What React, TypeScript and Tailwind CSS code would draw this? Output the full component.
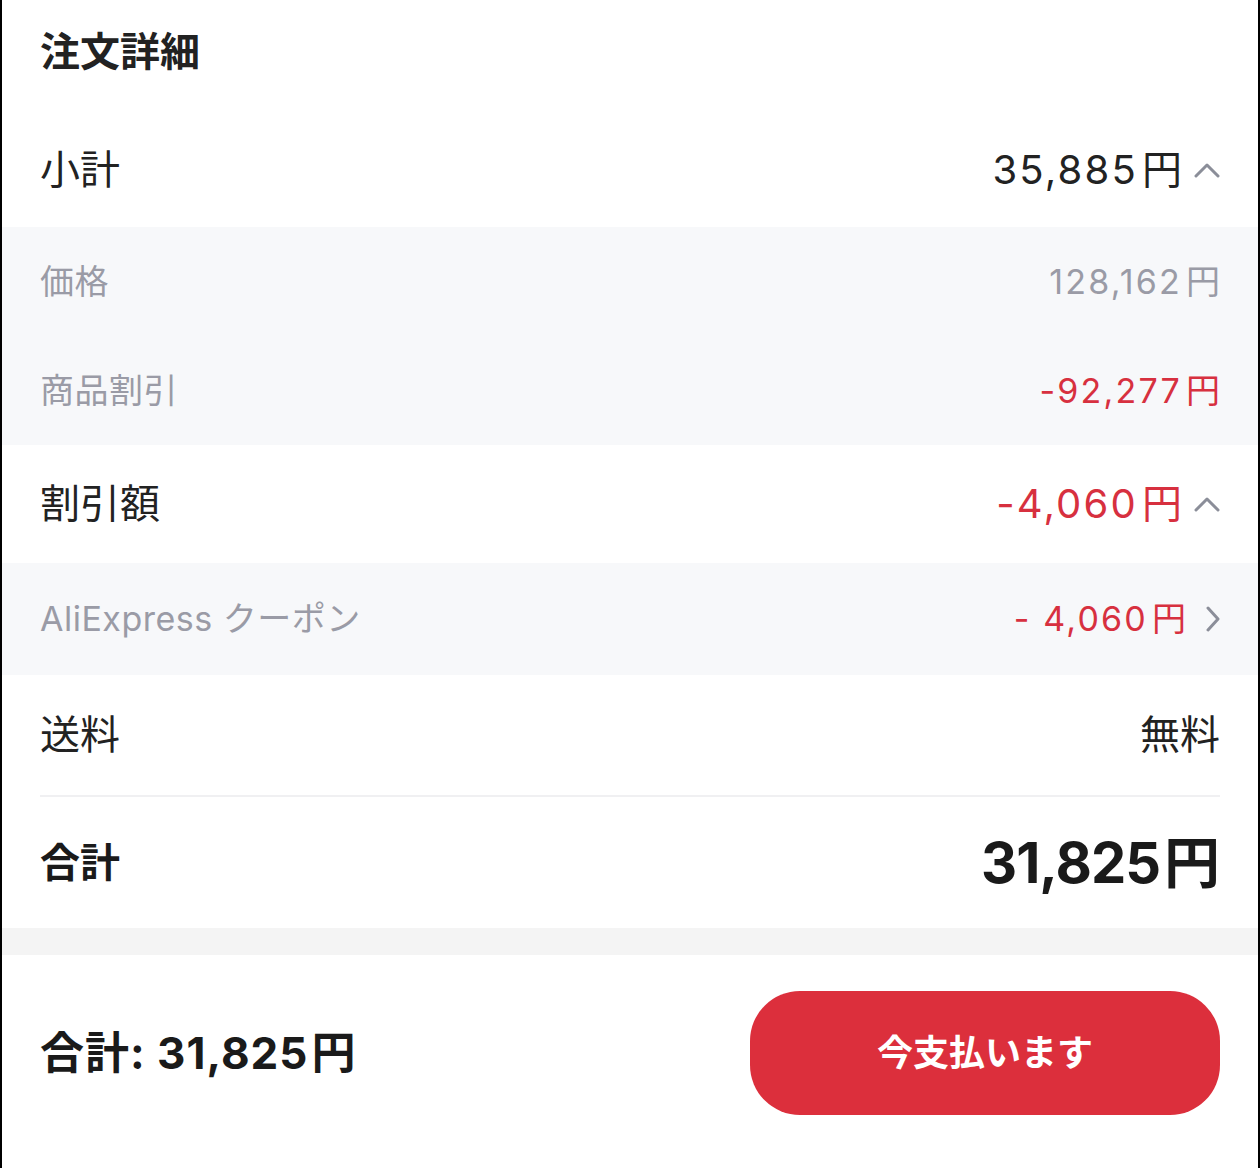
import React from "react";

const FONT = "font-['Inter','Noto_Sans_CJK_JP',sans-serif]";

function ChevronUp() {
  return (
    <svg width="26" height="16" viewBox="0 0 26 16" fill="none" className="ml-3 shrink-0">
      <path d="M2 14 L13 3 L24 14" stroke="#8b8e99" strokeWidth="3" strokeLinecap="round" strokeLinejoin="round" />
    </svg>
  );
}

function ChevronRight() {
  return (
    <svg width="14" height="26" viewBox="0 0 14 26" fill="none" className="ml-5 shrink-0">
      <path d="M2 2 L12 13 L2 24" stroke="#8b8e99" strokeWidth="3" strokeLinecap="round" strokeLinejoin="round" />
    </svg>
  );
}

// amount with a small gap before the yen sign, as in the app
function Yen({ n, className }: { n: string; className: string }) {
  return (
    <span className={`${className} leading-none`}>
      {n}
      <span className="ml-[4px] tracking-normal">円</span>
    </span>
  );
}

type RowProps = {
  label: string;
  value?: string;
  text?: string;
  h: string;
  tone?: "main" | "sub";
  red?: boolean;
  icon?: React.ReactNode;
};

function Row({ label, value, text, h, tone = "main", red, icon }: RowProps) {
  const labelCls = tone === "main" ? "text-[40px] text-[#222222]" : "text-[34px] text-[#9a9ba6] tracking-[0.5px]";
  const valueSize = tone === "main" ? "text-[40px]" : "text-[34px]";
  const valueColor = red ? "text-[#d7303f]" : tone === "main" ? "text-[#222222]" : "text-[#9a9ba6]";
  return (
    <div className={`flex items-center justify-between px-[38px] ${h}`}>
      <span className={`${labelCls} leading-none`}>{label}</span>
      <div className="flex items-center">
        {value ? (
          <Yen n={value} className={`${valueSize} ${valueColor} tracking-[2.2px]`} />
        ) : (
          <span className={`${valueSize} ${valueColor} leading-none`}>{text}</span>
        )}
        {icon}
      </div>
    </div>
  );
}

export default function App() {
  return (
    <div className={`${FONT} h-[1168px] w-[1260px] border-x-2 border-black bg-white flex flex-col`}>
      <div className="flex h-[112px] items-center px-[38px] pb-[8px]">
        <h1 className="text-[40px] font-bold leading-none text-[#222222]">注文詳細</h1>
      </div>

      <Row label="小計" value="35,885" h="h-[115px]" icon={<ChevronUp />} />

      <div className="bg-[#f7f8fa]">
        <Row label="価格" value="128,162" h="h-[109px]" tone="sub" />
        <Row label="商品割引" value="-92,277" h="h-[109px]" tone="sub" red />
      </div>

      <Row label="割引額" value="-4,060" h="h-[118px]" red icon={<ChevronUp />} />

      <div className="bg-[#f7f8fa]">
        <Row label="AliExpress クーポン" value="- 4,060" h="h-[112px]" tone="sub" red icon={<ChevronRight />} />
      </div>

      <Row label="送料" text="無料" h="h-[120px]" />

      <div className="mx-[38px] h-[2px] bg-[#f0f0f2]" />

      <div className="flex h-[131px] items-center justify-between px-[38px]">
        <span className="text-[40px] font-bold leading-none text-[#1a1a1a]">合計</span>
        <Yen n="31,825" className="text-[56px] font-bold tracking-[-1px] text-[#1a1a1a]" />
      </div>

      <div className="h-[27px] bg-[#f4f4f4]" />

      <div className="flex items-start justify-between px-[38px] pt-[36px]">
        <div className="flex h-[124px] items-center">
          <span className="text-[44px] font-bold leading-none tracking-[1px] text-[#1a1a1a]">
            合計: 31,825<span className="ml-[3px]">円</span>
          </span>
        </div>
        <button className="flex h-[124px] w-[470px] items-center justify-center rounded-[50px] bg-[#dc2f3c] text-[36px] font-bold text-white">
          今支払います
        </button>
      </div>
    </div>
  );
}
